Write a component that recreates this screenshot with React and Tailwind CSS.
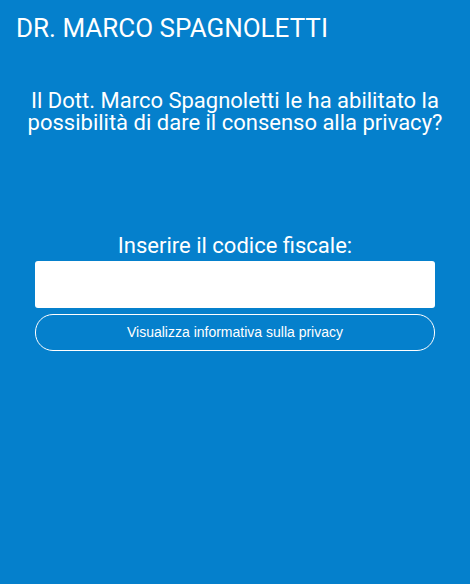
export default function App() {
    return (
        <div className="min-h-[584px] w-full bg-[#0580cc] text-white" style={{ fontFamily: 'Roboto, "Liberation Sans", sans-serif' }}>
            <div className="px-4 pt-[13px]">
                <h1 className="text-[26px] leading-[30px] font-normal">DR. MARCO SPAGNOLETTI</h1>
            </div>

            <p className="mt-[47px] px-4 text-center text-[22px] leading-[22px]">
                Il Dott. Marco Spagnoletti le ha abilitato la possibilità di dare il consenso alla privacy?
            </p>

            <div className="mt-[99px] flex flex-col items-center px-[35px]">
                <label className="text-[22px] leading-[26px] mb-[2px]" htmlFor="cf">
                    Inserire il codice fiscale:
                </label>
                <input
                    id="cf"
                    type="text"
                    className="w-full h-[47px] rounded-[3px] bg-white text-black px-3 outline-none"
                />
                <button
                    className="mt-[6px] w-full h-[37px] rounded-[18px] border border-white text-[14px] text-white"
                    style={{ fontFamily: '"Liberation Sans", Arial, sans-serif' }}
                >
                    Visualizza informativa sulla privacy
                </button>
            </div>
        </div>
    );
}
